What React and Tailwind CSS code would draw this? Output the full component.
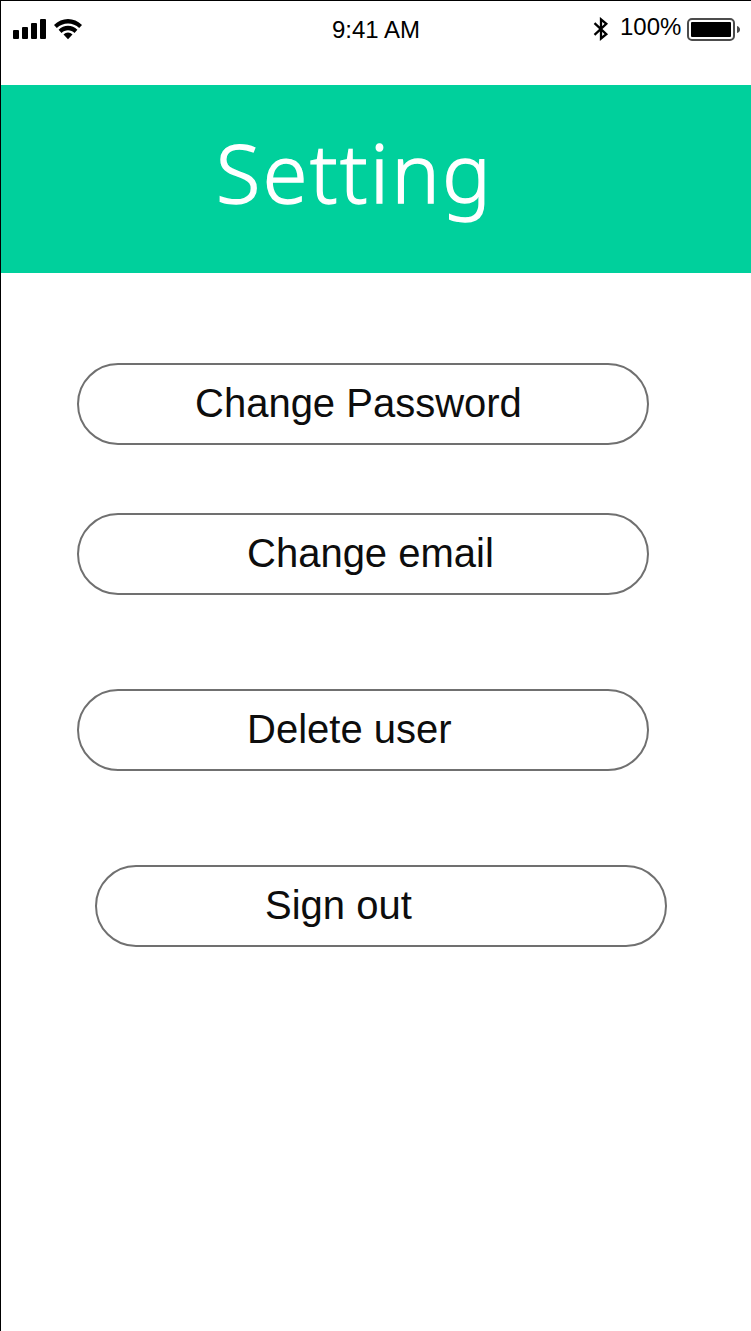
function Signal() {
  return (
    <svg className="mt-[18px] ml-3 h-[21px] w-[33px] shrink-0" viewBox="13 19 33 21" aria-hidden="true">
      <rect x="13" y="30" width="6" height="9" rx="1" />
      <rect x="22" y="27" width="6" height="12" rx="1" />
      <rect x="31" y="23" width="6" height="16" rx="1" />
      <rect x="40" y="19" width="6" height="20" rx="1" />
    </svg>
  );
}

function Wifi() {
  return (
    <svg className="mt-[17px] ml-2 h-[22px] w-7 shrink-0" viewBox="54 18 28 22" aria-hidden="true">
      <path d="M54 25C61.600 17 74.400 17 82 25L79.200 28C73.200 22 62.800 22 56.800 28Z" />
      <path d="M58.600 29.800C63.700 24.300 72.300 24.300 77.400 29.800L74.500 32.900C71 29.300 65 29.300 61.500 32.900Z" />
      <path d="M63.500 34.600C66.100 31.900 69.900 31.900 72.500 34.600L68 39.200Z" />
    </svg>
  );
}

function Bluetooth() {
  return (
    <svg className="mt-4 h-6 w-4 shrink-0" viewBox="593 17 16 24" fill="none" stroke="black" strokeWidth="2.300" aria-hidden="true">
      <path d="M594.500 23.200L606.300 34.100L601 38.500V19.400L606.300 23.900L594.500 34.800" />
    </svg>
  );
}

function Battery() {
  return (
    <svg className="mt-[17px] ml-1.5 h-6 w-[54px] shrink-0" viewBox="687 18 54 24" aria-hidden="true">
      <rect x="688" y="19" width="46" height="21" rx="4" fill="white" stroke="#4c4c4c" strokeWidth="2" />
      <rect x="691" y="22" width="40" height="15" rx="1" />
      <path d="M737 26Q740 27 740 29.500Q740 32 737 33Z" fill="#4c4c4c" />
    </svg>
  );
}

function StatusBar() {
  return (
    <div className="flex h-[84px] items-start text-[24px] leading-7 text-black">
      <Signal />
      <Wifi />
      <span className="mt-[15px] ml-[250px] w-[261px] whitespace-nowrap">9:41 AM</span>
      <Bluetooth />
      <span className="mt-3 ml-[11px] w-[61px] whitespace-nowrap">100%</span>
      <Battery />
    </div>
  );
}

function PillButton({ className, children }) {
  return (
    <button
      type="button"
      className={`block h-[82px] w-[572px] rounded-full border-2 border-[#707070] bg-white pb-0.5 text-left text-[40px] leading-[46px] whitespace-nowrap text-[#0d0d0d] ${className}`}
    >
      {children}
    </button>
  );
}

export default function App() {
  return (
    <main className="h-[1331px] w-[751px] overflow-hidden border-t border-l border-black bg-white font-['Liberation_Sans',Arial,sans-serif]">
      <StatusBar />
      <header className="h-[188px] bg-[#00d09c] pt-[30px] pl-[215px]">
        <h1 className="font-['Noto_Sans',sans-serif] text-[81px] leading-[114px] font-light tracking-[2.5px] text-white [-webkit-text-stroke:1.4px_white]">Setting</h1>
      </header>
      <nav className="flex flex-col pt-[90px] pl-[76px]">
        <PillButton className="pl-[116px]">Change Password</PillButton>
        <PillButton className="mt-[68px] pl-[168px]">Change email</PillButton>
        <PillButton className="mt-[94px] pl-[168px]">Delete user</PillButton>
        <PillButton className="mt-[94px] ml-[18px] pl-[168px]">Sign out</PillButton>
      </nav>
    </main>
  );
}
